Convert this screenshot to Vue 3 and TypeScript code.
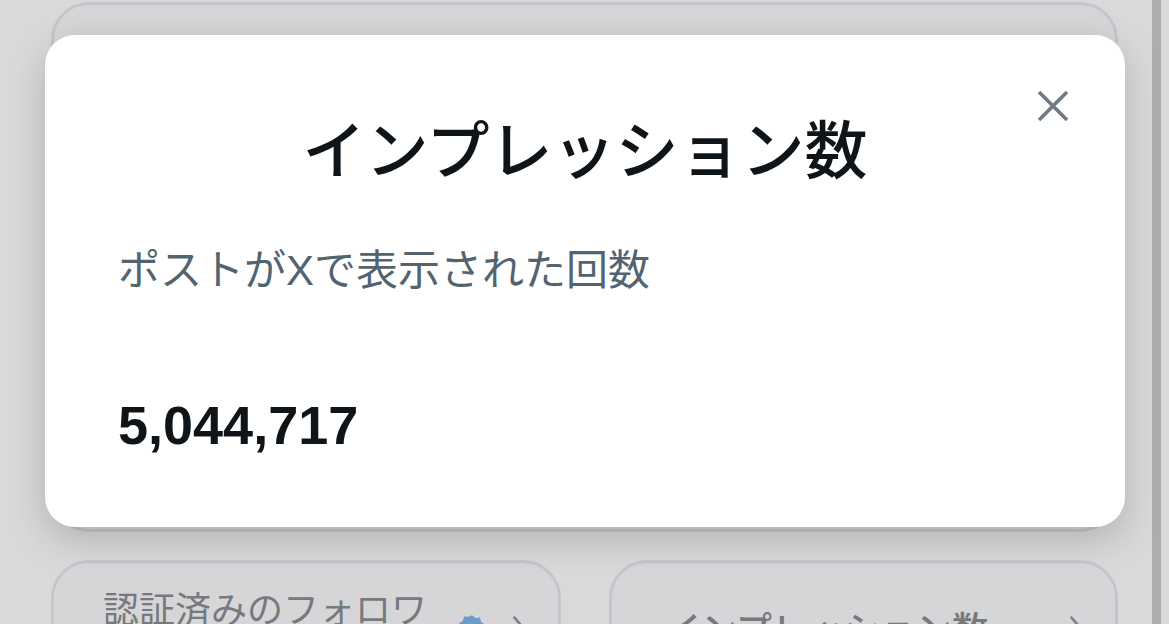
<script setup lang="ts">
const title = 'インプレッション数'
const value = '5,044,717'
</script>

<template>
  <div class="page">
    <div class="content">
      <div class="card top-card"></div>
      <div class="row">
        <div class="card small">
          <div class="label">認証済みのフォロワー数</div>
          <svg class="badge" viewBox="0 0 24 24"><path d="M12 1l3 2.4 3.8-.3 1 3.700 3.200 2.100-1.400 3.600 1.400 3.600-3.200 2.100-1 3.700-3.800-.3L12 23l-3-2.400-3.800.3-1-3.700L1 15.100l1.400-3.600L1 7.900l3.200-2.100 1-3.700 3.800.3z" fill="#6b9bc9"/></svg>
          <svg class="chev" viewBox="0 0 24 48"><path d="M3 3l18 21L3 45" fill="none" stroke="#7d7f83" stroke-width="4.500"/></svg>
        </div>
        <div class="card small center">
          <div class="label strong">{{ title }}</div>
          <svg class="chev" viewBox="0 0 24 48"><path d="M3 3l18 21L3 45" fill="none" stroke="#7d7f83" stroke-width="4.500"/></svg>
        </div>
      </div>
    </div>
    <div class="scrollbar"></div>
    <section class="modal">
      <button class="close" aria-label="閉じる">
        <svg viewBox="0 0 32 32"><path d="M2 2l28 28M30 2L2 30" stroke="#6f7a84" stroke-width="3.600" fill="none"/></svg>
      </button>
      <h1>{{ title }}</h1>
      <p class="desc">ポストがXで表示された回数</p>
      <p class="value">{{ value }}</p>
    </section>
  </div>
</template>

<style scoped>
.page {
  position: relative;
  width: 1169px;
  height: 624px;
  overflow: hidden;
  background: #d9d9d9;
  font-family: "Liberation Sans", "Noto Sans CJK JP", sans-serif;
}
.content {
  width: 1067px;
  margin-left: 51px;
  padding-top: 2px;
  display: flex;
  flex-direction: column;
  gap: 28px;
}
.card {
  box-sizing: border-box;
  border: 3px solid #c3c6cb;
  border-radius: 38px;
  background: #d6d6d8;
}
.top-card {
  height: 530px;
}
.row {
  display: grid;
  grid-template-columns: 510px 509px;
  column-gap: 48px;
}
.small {
  height: 130px;
  position: relative;
  display: flex;
  align-items: flex-start;
  padding: 26px 0 0 49px;
}
.center {
  padding: 46px 0 0 53px;
}
.label {
  font-size: 36px;
  line-height: 44px;
  width: 330px;
  color: #76797d;
}
.strong {
  width: 340px;
  font-weight: 500;
}
.badge {
  position: absolute;
  left: 404px;
  top: 51px;
  width: 28px;
  height: 28px;
}
.chev {
  position: absolute;
  right: 32px;
  top: 52px;
  width: 14px;
  height: 28px;
}
.scrollbar {
  position: absolute;
  left: 1152px;
  top: 0;
  width: 9px;
  height: 624px;
  background: #adadad;
}
.modal {
  position: absolute;
  left: 45px;
  top: 35px;
  width: 1080px;
  height: 492px;
  box-sizing: border-box;
  padding: 0 73px;
  background: #fff;
  border-radius: 30px;
  box-shadow: 0 12px 36px rgba(0, 0, 0, 0.18);
}
.close {
  position: absolute;
  right: 56px;
  top: 55px;
  width: 32px;
  height: 32px;
  padding: 0;
  border: 0;
  background: none;
}
.close svg {
  display: block;
  width: 32px;
  height: 32px;
}
h1 {
  margin: 0;
  padding-top: 71px;
  text-align: center;
  font-family: "Noto Sans CJK JP", sans-serif;
  font-size: 63px;
  line-height: 80px;
  font-weight: 500;
  color: #0f1419;
}
.desc {
  margin: 55px 0 0;
  font-size: 42px;
  line-height: 60px;
  color: #536471;
}
.value {
  margin: 92px 0 0;
  font-size: 54px;
  line-height: 64px;
  font-weight: 700;
  color: #0f1419;
}
</style>
